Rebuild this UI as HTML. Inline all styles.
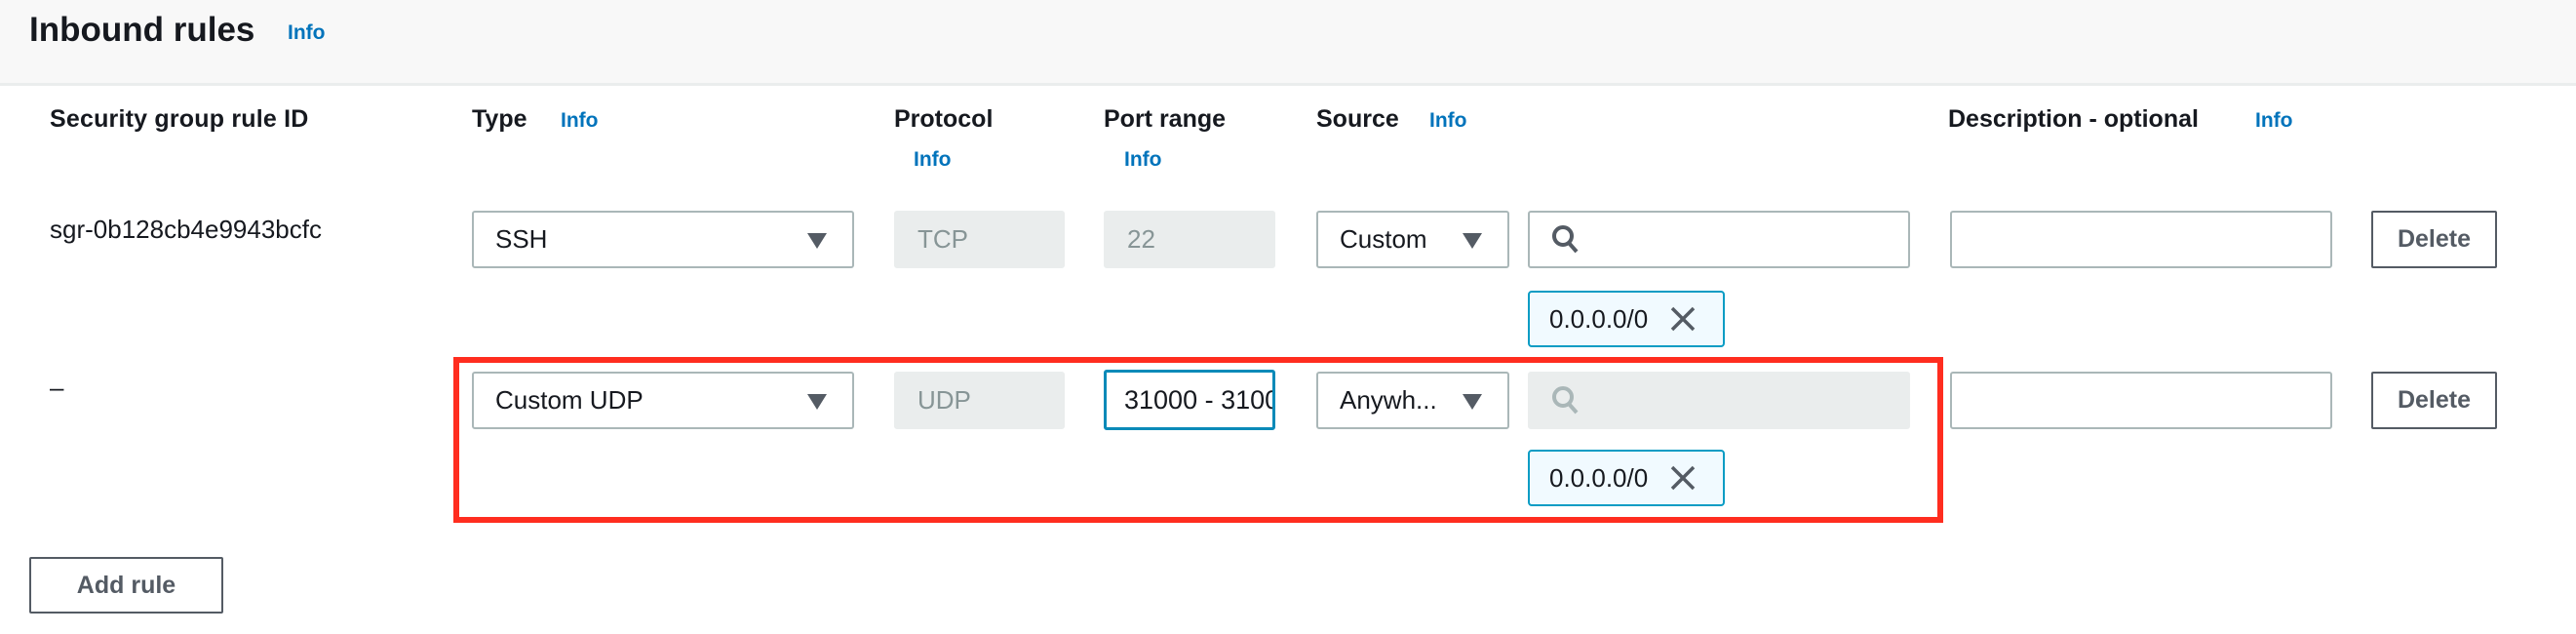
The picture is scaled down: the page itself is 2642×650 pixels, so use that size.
<!DOCTYPE html>
<html><head><meta charset="utf-8"><style>
*{box-sizing:border-box;margin:0;padding:0}
body{width:2642px;height:650px;position:relative;background:#fff;font-family:"Liberation Sans",sans-serif;color:#16191f;overflow:hidden}
.a{position:absolute}
.hd{left:0;top:0;width:2642px;height:88px;background:#f8f8f8;border-bottom:3px solid #eaeded}
.t{font-size:35px;font-weight:bold;left:30px;top:11px}
.info{color:#0073bb;font-weight:bold;font-size:21px}
.ch{font-size:25px;font-weight:bold;top:108px}
.box{border:2px solid #aab7b8;border-radius:3px;height:59px;font-size:26px;display:flex;align-items:center;padding-left:22px;background:#fff}
.dis{background:#eaeded;border-color:#eaeded;color:#879596}
.arr{position:absolute;right:26px;top:21px;width:0;height:0;border-left:10px solid transparent;border-right:10px solid transparent;border-top:16px solid #545b64}
.chip{border:2px solid #0a9cc4;background:#f1faff;border-radius:4px;height:58px;font-size:26px;display:flex;align-items:center;padding-left:20px;width:202px}
.btn{border:2px solid #545b64;border-radius:2px;height:59px;font-size:25px;font-weight:bold;color:#545b64;display:flex;align-items:center;justify-content:center;background:#fff}
</style></head><body>
<div class="a hd"></div>
<div class="a t">Inbound rules</div>
<div class="a info" style="left:295px;top:22px">Info</div>

<div class="a ch" style="left:51px;letter-spacing:0.2px">Security group rule ID</div>
<div class="a ch" style="left:484px">Type</div><div class="a info" style="left:575px;top:112px">Info</div>
<div class="a ch" style="left:917px">Protocol</div><div class="a info" style="left:937px;top:152px">Info</div>
<div class="a ch" style="left:1132px">Port range</div><div class="a info" style="left:1153px;top:152px">Info</div>
<div class="a ch" style="left:1350px">Source</div><div class="a info" style="left:1466px;top:112px">Info</div>
<div class="a ch" style="left:1998px">Description - optional</div><div class="a info" style="left:2313px;top:112px">Info</div>

<div class="a" style="left:51px;top:220px;font-size:26px">sgr-0b128cb4e9943bcfc</div>
<div class="a box" style="left:484px;top:216px;width:392px">SSH<span class="arr"></span></div>
<div class="a box dis" style="left:917px;top:216px;width:175px">TCP</div>
<div class="a box dis" style="left:1132px;top:216px;width:176px">22</div>
<div class="a box" style="left:1350px;top:216px;width:198px">Custom<span class="arr"></span></div>
<div class="a box" style="left:1567px;top:216px;width:392px"><svg width="30" height="32" viewBox="0 0 30 32"><circle cx="12" cy="12" r="9" fill="none" stroke="#545b64" stroke-width="4"/><path d="M18 19 L26 28" stroke="#545b64" stroke-width="4"/></svg></div>
<div class="a box" style="left:2000px;top:216px;width:392px"></div>
<div class="a btn" style="left:2432px;top:216px;width:129px">Delete</div>
<div class="a chip" style="left:1567px;top:298px">0.0.0.0/0<svg style="margin-left:22px" width="28" height="28" viewBox="0 0 28 28"><path d="M3 3L25 25M25 3L3 25" stroke="#545b64" stroke-width="3.5"/></svg></div>

<div class="a" style="left:51px;top:382px;font-size:26px">–</div>
<div class="a box" style="left:484px;top:381px;width:392px">Custom UDP<span class="arr"></span></div>
<div class="a box dis" style="left:917px;top:381px;width:175px">UDP</div>
<div class="a box" style="left:1132px;top:379px;width:176px;height:62px;border:3px solid #0a8ab8;padding-left:18px;overflow:hidden;white-space:nowrap;font-size:27px">31000 - 31000</div>
<div class="a box" style="left:1350px;top:381px;width:198px">Anywh...<span class="arr"></span></div>
<div class="a box dis" style="left:1567px;top:381px;width:392px"><svg width="30" height="32" viewBox="0 0 30 32"><circle cx="12" cy="12" r="9" fill="none" stroke="#aab7b8" stroke-width="4"/><path d="M18 19 L26 28" stroke="#aab7b8" stroke-width="4"/></svg></div>
<div class="a box" style="left:2000px;top:381px;width:392px"></div>
<div class="a btn" style="left:2432px;top:381px;width:129px">Delete</div>
<div class="a chip" style="left:1567px;top:461px">0.0.0.0/0<svg style="margin-left:22px" width="28" height="28" viewBox="0 0 28 28"><path d="M3 3L25 25M25 3L3 25" stroke="#545b64" stroke-width="3.5"/></svg></div>

<div class="a" style="left:465px;top:366px;width:1528px;height:170px;border:6px solid #ff2d1f"></div>

<div class="a btn" style="left:30px;top:571px;width:199px;height:58px">Add rule</div>
</body></html>
